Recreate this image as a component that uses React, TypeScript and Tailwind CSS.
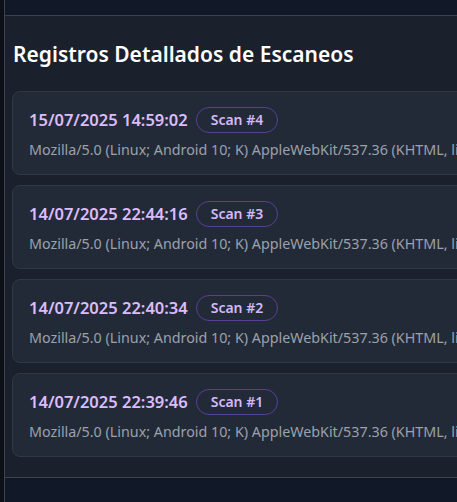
const scans = [
  { date: "15/07/2025 14:59:02", n: 4 },
  { date: "14/07/2025 22:44:16", n: 3 },
  { date: "14/07/2025 22:40:34", n: 2 },
  { date: "14/07/2025 22:39:46", n: 1 },
];

const ua =
  "Mozilla/5.0 (Linux; Android 10; K) AppleWebKit/537.36 (KHTML, like Gecko) Chrome/138.0.0.0 Mobile Safari/537.36";

const App = () => {
  return (
    <div className="h-[502px] w-[457px] overflow-hidden bg-[#0d1117] pl-1 font-['Noto_Sans',sans-serif]">
      <div className="flex h-full w-[640px] flex-col border-l border-l-[#3a4150] bg-[#111827]">
        <div className="h-4 border-b border-b-[#3a4150]" />
        <div className="flex flex-col gap-[23px] border-b border-b-[#3a4150] bg-[#1a202c] px-[7px] pt-6 pb-5">
          <h2 className="pl-px text-[21px] leading-7 font-semibold text-white">
            Registros Detallados de Escaneos
          </h2>
          <div className="flex flex-col gap-2.5">
            {scans.map((s) => (
              <div
                key={s.n}
                className="flex h-[84px] flex-col gap-[7px] rounded-lg border border-[#2f3847] bg-[#222a38] px-4 pt-[15px]"
              >
                <div className="flex items-center gap-2">
                  <span className="text-[16.5px] font-semibold text-[#dcbcfb]">
                    {s.date}
                  </span>
                  <span className="rounded-full border border-[#5b3e96] px-3.5 py-0.5 text-sm font-semibold text-[#d4b8fb]">
                    Scan #{s.n}
                  </span>
                </div>
                <p className="whitespace-nowrap text-[14.3px] leading-5 text-[#9ca1ab]">
                  {ua}
                </p>
              </div>
            ))}
          </div>
        </div>
        <div className="flex-1" />
      </div>
    </div>
  );
};

export default App;
